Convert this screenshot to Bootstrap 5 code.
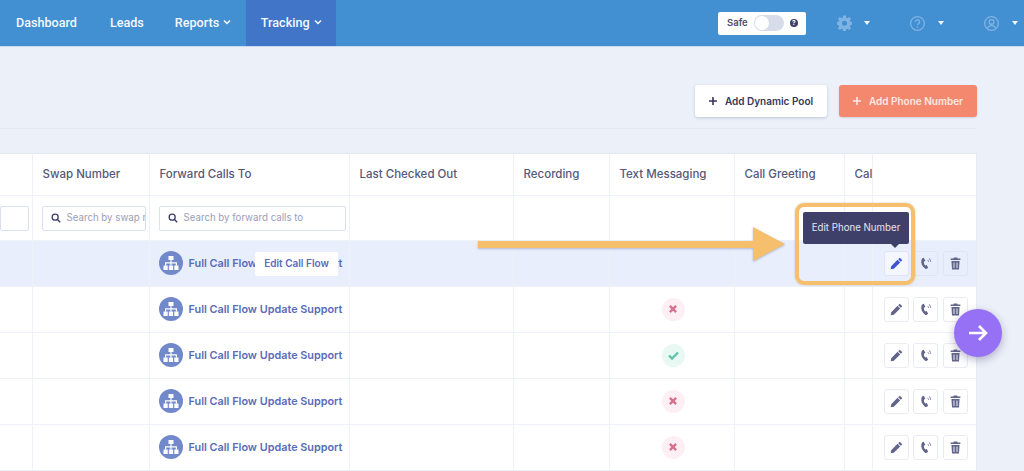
<!DOCTYPE html>
<html lang="en">
<head>
<meta charset="utf-8">
<title>Tracking</title>
<link href="https://cdn.jsdelivr.net/npm/bootstrap@5.3.0/dist/css/bootstrap.min.css" rel="stylesheet">
<style>
html,body{height:471px;overflow:hidden}
body{background:#ecf0f9;font-family:Inter,"Liberation Sans",sans-serif;color:#4a4d70;position:relative}
.topbar{height:47px;background:#428fd2;border-bottom:1px solid #c9d8ee;padding:0}
.menu-link{display:flex;align-items:center;gap:4px;height:46px;padding-bottom:2px;color:#f4f8fd;font:500 12.600px Roboto,Inter,"Liberation Sans",sans-serif;text-decoration:none}
.menu-active{background:#4175c8;width:90px;justify-content:center}
.safe-box{width:88px;height:23px;background:#fff;border-radius:2px;font-size:9.5px;font-weight:600;color:#4a4d70;gap:6px;padding-left:9px;margin-right:31px}
.toggle-track{width:30px;height:16px;border-radius:8px;background:#d6dcea;display:block;padding:1px}
.toggle-knob{width:14px;height:14px;border-radius:50%;background:#fff;display:block}
.help-dot{width:8px;height:8px;border-radius:50%;background:#3f4069;color:#fff;font-size:6.5px;line-height:8px;text-align:center;font-weight:700}
.top-icon{color:#7fb3e3;flex:none}
.tri-down{width:0;height:0;border-left:3px solid transparent;border-right:3px solid transparent;border-top:4px solid #f2f6fc;display:block}
.toolbar{height:82px;width:977px;padding-top:38px;border-bottom:1px solid #e3e8f3;gap:12px}
.add-btn{height:32px;border-radius:3px;border:0;font-size:10px;font-weight:600;display:flex;align-items:center;justify-content:center;gap:8px;padding:0}
.add-white{width:132px;background:#fff;color:#35375c;box-shadow:0 1px 3px rgba(60,70,110,.25)}
.add-coral{width:138px;background:#f3886f;color:#fde9e4;box-shadow:0 1px 2px rgba(60,70,110,.18)}
.data-wrap{width:977px;height:318px;margin-top:24px;background:#fff;border-top:1px solid #e3e8f3;overflow:hidden;border-right:1px solid #e6eaf3}
.data-grid{table-layout:fixed;width:976px;border-collapse:collapse;margin:0}
.data-grid th,.data-grid td{padding:0 10px;border-right:1px solid #eef1f7;border-bottom:1px solid #eef1f7;overflow:hidden;white-space:nowrap;vertical-align:middle;background:transparent;box-shadow:none}
.data-grid th{height:41px;font-size:11.500px;font-weight:500;color:#55587a}
.data-grid .filter-row td{height:45px;padding:0 3px 0 9px}
.data-grid .filter-row td.stub-cell{padding-left:0}
.body-row td{height:46px}
.data-grid .row-hot td{background:#e8eefb}
.data-grid .pin-col{background:#fff;box-shadow:-3px 0 5px rgba(70,80,120,.05);border-right:0;padding:0 0 0 11px}
.data-grid .row-hot .pin-col{background:#e8eefb}
.data-grid .filter-row .pin-col{padding:0}
.search-field{height:25px;margin-top:1px;border:1px solid #d9e0ee;border-radius:2px;background:#fff;display:flex;align-items:center;gap:6px;padding-left:8px;font-size:9.700px;color:#9a9eb8;overflow:hidden}
.search-field svg{flex:none}
.flow-cell{display:flex;align-items:center;gap:6px;margin-left:-1px;color:#5a6cb8;font-size:10.850px;font-weight:600}
.flow-dot{width:24px;height:24px;border-radius:50%;background:#7188cb;display:flex;align-items:center;justify-content:center;flex:none}
.state-dot{width:23px;height:23px;border-radius:50%;display:flex;align-items:center;justify-content:center;margin-left:42px}
.state-no{background:#fdeff4}
.state-yes{background:#e8f8f3}
.act-group{display:flex;gap:4.500px}
.act-btn{width:25px;height:25px;border:1px solid #e8ebf4;border-radius:3px;background:#fff;display:flex;align-items:center;justify-content:center;padding:0;color:#62658a}
.row-hot .act-btn{background:transparent;border-color:#dfe5f3}
.row-hot .act-on{background:#f5f7fe;border-color:#dfe5f5;color:#3f52d0}
.cal-clip{display:block;width:18px;overflow:hidden}
.mark-box{position:absolute;left:795px;top:203px;width:120px;height:82px;border:4px solid #f5bf6e;border-radius:9px;box-shadow:0 0 2px rgba(120,100,60,.4)}
.mark-arrow{position:absolute;left:477px;top:226px;filter:drop-shadow(0 1px 1px rgba(90,100,140,.4))}
.tip-dark{position:absolute;left:803px;top:212px;width:106px;height:32px;background:#3f4069;color:#e4e5f0;border-radius:2px;font-size:9.700px;display:flex;align-items:center;justify-content:center}
.tip-dark::after{content:"";position:absolute;left:88px;top:32px;border-left:4px solid transparent;border-right:4px solid transparent;border-top:4px solid #3f4069}
.tip-white{position:absolute;left:255px;top:252px;width:83px;height:24px;padding-bottom:2px;background:#fff;border-radius:2px;color:#5a6cb8;font-size:10px;font-weight:600;display:flex;align-items:center;justify-content:center}
.fab-next{position:absolute;left:954px;top:309px;width:48px;height:48px;border-radius:50%;background:#9670f5;border:0;display:flex;align-items:center;justify-content:center;box-shadow:0 3px 8px rgba(60,50,110,.35);padding:0}
</style>
</head>
<body>
<nav class="topbar d-flex align-items-center">
  <div class="d-flex align-items-center">
    <a class="menu-link ms-3" href="#">Dashboard</a>
    <a class="menu-link" style="margin-left:33px" href="#">Leads</a>
    <a class="menu-link" style="margin-left:31px" href="#">Reports <svg width="8" height="6" viewBox="0 0 8 6"><path d="M1 1.500l3 3 3-3" fill="none" stroke="#f4f8fd" stroke-width="1.500"/></svg></a>
    <a class="menu-link menu-active" style="margin-left:15px" href="#">Tracking <svg width="8" height="6" viewBox="0 0 8 6"><path d="M1 1.500l3 3 3-3" fill="none" stroke="#f4f8fd" stroke-width="1.500"/></svg></a>
  </div>
  <div class="ms-auto d-flex align-items-center">
    <div class="safe-box d-flex align-items-center">Safe <span class="toggle-track"><span class="toggle-knob"></span></span><span class="help-dot">?</span></div>
    <svg class="top-icon" width="15" height="16" viewBox="0 0 16 16"><path fill="currentColor" d="M6.600 0h2.800l.4 2.200 1.300.6 1.900-1.300 2 2-1.300 1.900.6 1.300 2.200.4v2.800l-2.200.4-.6 1.300 1.300 1.900-2 2-1.900-1.300-1.300.6-.4 2.200H6.600l-.4-2.200-1.300-.6L3 15.500l-2-2 1.300-1.900-.6-1.300L-.5 9.900V7.100l2.200-.4.6-1.300L1 3.500l2-2 1.900 1.300 1.300-.6zM8 5.500a2.700 2.700 0 1 0 0 5.400 2.700 2.700 0 0 0 0-5.400z"/></svg>
    <span class="tri-down" style="margin-left:12px"></span>
    <svg class="top-icon" style="margin-left:40px" width="15" height="15" viewBox="0 0 16 16"><circle cx="8" cy="8" r="7.300" fill="none" stroke="currentColor" stroke-width="1.400"/><path d="M5.800 6.200a2.200 2.200 0 1 1 3.300 1.900c-.7.400-1.100.8-1.100 1.600" fill="none" stroke="currentColor" stroke-width="1.400"/><circle cx="8" cy="11.700" r=".9" fill="currentColor"/></svg>
    <span class="tri-down" style="margin-left:13px"></span>
    <svg class="top-icon" style="margin-left:40px" width="15" height="15" viewBox="0 0 16 16"><circle cx="8" cy="8" r="7.300" fill="none" stroke="currentColor" stroke-width="1.400"/><circle cx="8" cy="6.300" r="2.500" fill="none" stroke="currentColor" stroke-width="1.400"/><path d="M3.500 13c.8-2 2.500-2.800 4.500-2.800s3.700.8 4.500 2.800" fill="none" stroke="currentColor" stroke-width="1.400"/></svg>
    <span class="tri-down" style="margin-left:13px;margin-right:6px"></span>
  </div>
</nav>

<div class="toolbar d-flex justify-content-end align-items-start">
  <button class="add-btn add-white"><svg width="8" height="8" viewBox="0 0 9 9"><path d="M4.500 0v9M0 4.500h9" stroke="#35375c" stroke-width="1.800"/></svg>Add Dynamic Pool</button>
  <button class="add-btn add-coral"><svg width="8" height="8" viewBox="0 0 9 9"><path d="M4.500 0v9M0 4.500h9" stroke="#fde9e4" stroke-width="1.800"/></svg>Add Phone Number</button>
</div>

<svg width="0" height="0" class="d-block" aria-hidden="true">
  <defs>
    <symbol id="ic-tree" viewBox="0 0 16 16"><path fill="#fff" d="M5.500 1h5v4h-5zM.5 10.500h4.200V15H.5zM5.900 10.500h4.200V15H5.900zM11.300 10.500h4.200V15h-4.200z"/><path fill="none" stroke="#fff" stroke-width="1.200" d="M8 5v5.500M2.600 10.500V7.800h10.800v2.700"/></symbol>
    <symbol id="ic-pen" viewBox="0 0 16 16"><path fill="currentColor" d="M12 .8l3.200 3.200-1.900 1.900-3.200-3.200zM9.300 3.500l3.200 3.200-7.800 7.800L.8 15.200l.7-3.900z"/></symbol>
    <symbol id="ic-phone" viewBox="0 0 16 16"><path fill="currentColor" d="M5.800 1l2 3.600-1.700 1.300c-.2 1.500.3 3.200 1.400 4.500l2-.6 1.800 3.500c-1.300 1.500-3 1.800-4.200.7C3.500 11.300 2.200 7.600 3 3.700 3.300 2.300 4.400 1.300 5.800 1z"/><path fill="none" stroke="currentColor" stroke-width="1.300" opacity=".65" d="M10.500 3.800c.9.500 1.400 1.300 1.400 2.400M12.400 1.800c1.300.9 2 2.400 2 4.200"/></symbol>
    <symbol id="ic-trash" viewBox="0 0 16 16"><path fill="currentColor" d="M6 .5h4l.6 1.300H14v1.900H2V1.800h3.400zM3 5h10l-.7 10.500H3.700zM5.600 6.800v6.800h1.100V6.800zm3.700 0v6.800h1.100V6.800z"/></symbol>
    <symbol id="ic-search" viewBox="0 0 12 12"><circle cx="5" cy="5" r="3.600" fill="none" stroke="#3f4069" stroke-width="1.600"/><path d="M7.800 7.800l3.200 3.200" stroke="#3f4069" stroke-width="1.800"/></symbol>
  </defs>
</svg>

<div class="data-wrap">
  <table class="table data-grid">
    <colgroup><col style="width:32px"><col style="width:117px"><col style="width:200px"><col style="width:164px"><col style="width:96px"><col style="width:125px"><col style="width:110px"><col style="width:28px"><col style="width:104px"></colgroup>
    <thead>
      <tr><th></th><th>Swap Number</th><th>Forward Calls To</th><th>Last Checked Out</th><th>Recording</th><th>Text Messaging</th><th>Call Greeting</th><th><span class="cal-clip">Call</span></th><th class="pin-col"></th></tr>
    </thead>
    <tbody>
      <tr class="filter-row">
        <td class="stub-cell"><div class="search-field"></div></td>
        <td><div class="search-field"><svg width="10" height="10"><use href="#ic-search"/></svg>Search by swap n</div></td>
        <td><div class="search-field"><svg width="10" height="10"><use href="#ic-search"/></svg>Search by forward calls to</div></td>
        <td></td><td></td><td></td><td></td><td></td><td class="pin-col"></td>
      </tr>
      <tr class="body-row row-hot">
        <td></td><td></td>
        <td><div class="flow-cell"><span class="flow-dot"><svg width="16" height="16"><use href="#ic-tree"/></svg></span>Full Call Flow Update Support</div></td>
        <td></td><td></td><td></td><td></td><td></td>
        <td class="pin-col"><div class="act-group"><button class="act-btn act-on"><svg width="13" height="13"><use href="#ic-pen"/></svg></button><button class="act-btn"><svg width="13" height="13"><use href="#ic-phone"/></svg></button><button class="act-btn"><svg width="13" height="13"><use href="#ic-trash"/></svg></button></div></td>
      </tr>
      <tr class="body-row">
        <td></td><td></td>
        <td><div class="flow-cell"><span class="flow-dot"><svg width="16" height="16"><use href="#ic-tree"/></svg></span>Full Call Flow Update Support</div></td>
        <td></td><td></td>
        <td><span class="state-dot state-no"><svg width="8" height="8" viewBox="0 0 9 9"><path d="M1 1l7 7M8 1L1 8" stroke="#d9708e" stroke-width="2.600"/></svg></span></td>
        <td></td><td></td>
        <td class="pin-col"><div class="act-group"><button class="act-btn"><svg width="13" height="13"><use href="#ic-pen"/></svg></button><button class="act-btn"><svg width="13" height="13"><use href="#ic-phone"/></svg></button><button class="act-btn"><svg width="13" height="13"><use href="#ic-trash"/></svg></button></div></td>
      </tr>
      <tr class="body-row">
        <td></td><td></td>
        <td><div class="flow-cell"><span class="flow-dot"><svg width="16" height="16"><use href="#ic-tree"/></svg></span>Full Call Flow Update Support</div></td>
        <td></td><td></td>
        <td><span class="state-dot state-yes"><svg width="11" height="9" viewBox="0 0 11 9"><path d="M1 4.500l3 3 6-6" fill="none" stroke="#62c3a6" stroke-width="2.400"/></svg></span></td>
        <td></td><td></td>
        <td class="pin-col"><div class="act-group"><button class="act-btn"><svg width="13" height="13"><use href="#ic-pen"/></svg></button><button class="act-btn"><svg width="13" height="13"><use href="#ic-phone"/></svg></button><button class="act-btn"><svg width="13" height="13"><use href="#ic-trash"/></svg></button></div></td>
      </tr>
      <tr class="body-row">
        <td></td><td></td>
        <td><div class="flow-cell"><span class="flow-dot"><svg width="16" height="16"><use href="#ic-tree"/></svg></span>Full Call Flow Update Support</div></td>
        <td></td><td></td>
        <td><span class="state-dot state-no"><svg width="8" height="8" viewBox="0 0 9 9"><path d="M1 1l7 7M8 1L1 8" stroke="#d9708e" stroke-width="2.600"/></svg></span></td>
        <td></td><td></td>
        <td class="pin-col"><div class="act-group"><button class="act-btn"><svg width="13" height="13"><use href="#ic-pen"/></svg></button><button class="act-btn"><svg width="13" height="13"><use href="#ic-phone"/></svg></button><button class="act-btn"><svg width="13" height="13"><use href="#ic-trash"/></svg></button></div></td>
      </tr>
      <tr class="body-row">
        <td></td><td></td>
        <td><div class="flow-cell"><span class="flow-dot"><svg width="16" height="16"><use href="#ic-tree"/></svg></span>Full Call Flow Update Support</div></td>
        <td></td><td></td>
        <td><span class="state-dot state-no"><svg width="8" height="8" viewBox="0 0 9 9"><path d="M1 1l7 7M8 1L1 8" stroke="#d9708e" stroke-width="2.600"/></svg></span></td>
        <td></td><td></td>
        <td class="pin-col"><div class="act-group"><button class="act-btn"><svg width="13" height="13"><use href="#ic-pen"/></svg></button><button class="act-btn"><svg width="13" height="13"><use href="#ic-phone"/></svg></button><button class="act-btn"><svg width="13" height="13"><use href="#ic-trash"/></svg></button></div></td>
      </tr>
    </tbody>
  </table>
</div>

<div class="tip-white">Edit Call Flow</div>
<svg class="mark-arrow" width="310" height="36" viewBox="0 0 310 36"><path fill="#f5bf6e" d="M1 15H276V1L308 18 276 35V22H1z"/></svg>
<div class="mark-box"></div>
<div class="tip-dark">Edit Phone Number</div>
<button class="fab-next" aria-label="Next"><svg width="20" height="18" viewBox="0 0 20 18"><path d="M1 9h17M11 2l7 7-7 7" fill="none" stroke="#fff" stroke-width="2.600"/></svg></button>
<script src="https://cdn.jsdelivr.net/npm/bootstrap@5.3.0/dist/js/bootstrap.bundle.min.js"></script>
</body>
</html>
